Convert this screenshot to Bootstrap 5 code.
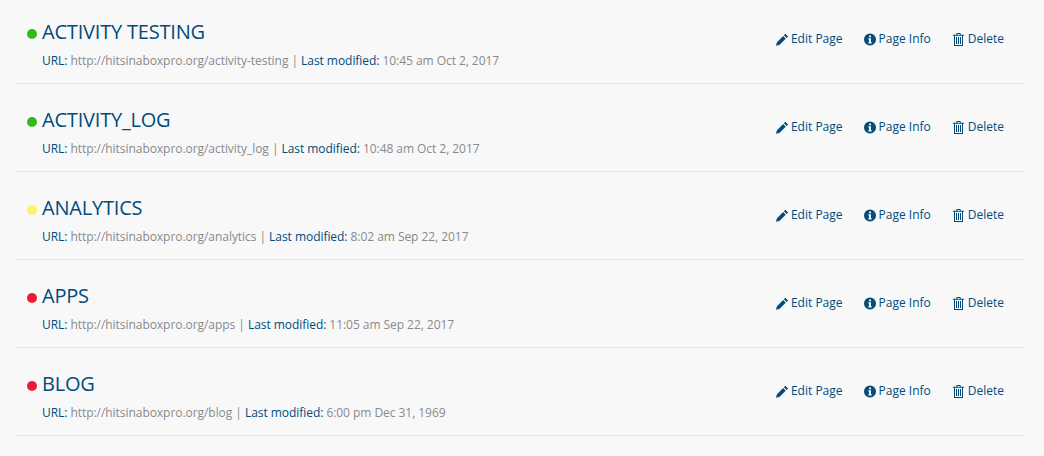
<!DOCTYPE html>
<html lang="en">

<head>
  <meta charset="UTF-8">
  <title>Pages</title>
  <meta name="viewport" content="width=device-width, initial-scale=1">
  <link href="https://cdn.jsdelivr.net/npm/bootstrap@5.3.0/dist/css/bootstrap.min.css" rel="stylesheet">
  <script src="https://cdn.jsdelivr.net/npm/bootstrap@5.3.0/dist/js/bootstrap.bundle.min.js"></script>
  <style>
    body {
      font-family: "Open Sans", sans-serif;
      background-color: #f8f8f8;
      color: #004c7c;
      overflow: hidden;
    }

    .page-list {
      margin: 0 19px 0 17px;
    }

    .page-row {
      height: 88px;
      padding-top: 17px;
      padding-right: 21px;
      border-bottom: 1px solid #e3e3e3;
    }

    .page-row:first-child {
      height: 84px;
      padding-top: 13px;
    }

    .status-dot {
      width: 10px;
      height: 10px;
      border-radius: 50%;
      margin: 4px 5px 0 10px;
      flex: none;
    }

    .dot-green { background-color: #34b91a; }
    .dot-yellow { background-color: #f9f36a; }
    .dot-red { background-color: #ee1c36; }

    .page-title {
      font-size: 20px;
      line-height: 38px;
      font-weight: 400;
      letter-spacing: -0.2px;
      margin: 0;
      color: #004c7c;
    }

    .page-meta {
      font-size: 12px;
      line-height: 18px;
      letter-spacing: -0.05px;
      margin: 1px 0 0 25px;
      color: #004c7c;
    }

    .meta-value {
      color: #888a8c;
    }

    .page-actions {
      font-size: 12px;
      line-height: 18px;
      margin-top: 17px;
      gap: 21px;
    }

    .page-actions a {
      color: #004c7c;
      text-decoration: none;
      display: flex;
      align-items: center;
      gap: 3px;
    }

    .page-actions svg {
      height: 13px;
      fill: #004c7c;
      flex: none;
    }

    .icon-edit { width: 12px; }
    .icon-info { width: 12px; }
    .icon-trash { width: 11px; margin: 0 1px; }
  </style>
</head>

<body>
  <div class="page-list" id="pageList"></div>

  <script>
    const pages = [
      { name: "ACTIVITY TESTING", url: "http://hitsinaboxpro.org/activity-testing", modified: "10:45 am Oct 2, 2017", dot: "dot-green" },
      { name: "ACTIVITY_LOG", url: "http://hitsinaboxpro.org/activity_log", modified: "10:48 am Oct 2, 2017", dot: "dot-green" },
      { name: "ANALYTICS", url: "http://hitsinaboxpro.org/analytics", modified: "8:02 am Sep 22, 2017", dot: "dot-yellow" },
      { name: "APPS", url: "http://hitsinaboxpro.org/apps", modified: "11:05 am Sep 22, 2017", dot: "dot-red" },
      { name: "BLOG", url: "http://hitsinaboxpro.org/blog", modified: "6:00 pm Dec 31, 1969", dot: "dot-red" }
    ];

    const pencil = '<svg class="icon-edit" viewBox="0 0 12 13"><path d="M9.400.8 12 3.400 10.500 4.900 7.900 2.300zM7.100 3.100 9.700 5.700 3.400 12 0 12.800.8 9.400z"/></svg>';
    const info = '<svg class="icon-info" viewBox="0 0 12 13"><path fill-rule="evenodd" d="M6 .5a6 6 0 1 1 0 12 6 6 0 0 1 0-12zM5 2.500v1.800h2V2.500H5zM4.300 5.300v1.200H5v2.700h-.7v1.200h3.400V9.200H7V5.300H4.300z"/></svg>';
    const trash = '<svg class="icon-trash" viewBox="0 0 11 13"><path fill-rule="evenodd" d="M3.700 0h3.600l.8 1.800H11v1H10V13H1V2.800H0v-1h2.900L3.700 0zm.4 1-.3.800h3.400L6.900 1H4.100zM2 2.800V12h7V2.800H2zM3 4h1v7H3V4zm2 0h1v7H5V4zm2 0h1v7H7V4z"/></svg>';

    const list = document.getElementById("pageList");
    pages.forEach((page) => {
      const row = document.createElement("div");
      row.className = "page-row d-flex justify-content-between align-items-start";
      row.innerHTML = `
        <div>
          <div class="d-flex align-items-center">
            <span class="status-dot ${page.dot}"></span>
            <h2 class="page-title">${page.name}</h2>
          </div>
          <p class="page-meta">URL: <span class="meta-value">${page.url}</span> <span class="meta-value">|</span> Last modified: <span class="meta-value">${page.modified}</span></p>
        </div>
        <div class="page-actions d-flex">
          <a href="#">${pencil}Edit Page</a>
          <a href="#">${info}Page Info</a>
          <a href="#">${trash}Delete</a>
        </div>
      `;
      list.appendChild(row);
    });
  </script>
</body>

</html>
